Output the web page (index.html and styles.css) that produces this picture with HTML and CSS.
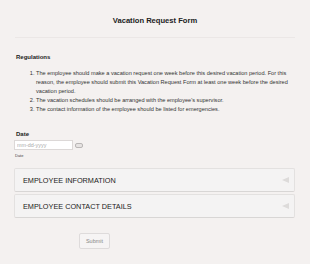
FILE: index.html
```html
<!DOCTYPE html>
<html lang="en">
<head>
    <meta charset="UTF-8">
    <meta name="viewport" content="width=device-width, initial-scale=1.0">
    <title>Vacation Request Form</title>
    <link rel="stylesheet" href="styles.css">
</head>
<body>
    <div class="form-wrap">
        <h1 class="form-title">Vacation Request Form</h1>
        <hr class="title-line">

        <h2 class="section-label">Regulations</h2>
        <ol class="rules">
            <li>The employee should make a vacation request one week before this desired vacation period. For this reason, the employee should submit this Vacation Request Form at least one week before the desired vacation period.</li>
            <li>The vacation schedules should be arranged with the employee's supervisor.</li>
            <li>The contact information of the employee should be listed for emergencies.</li>
        </ol>

        <div class="date-field">
            <label class="section-label" for="vacationDate">Date</label>
            <div class="date-row">
                <input type="text" id="vacationDate" class="date-input" placeholder="mm-dd-yyyy">
                <span class="date-icon"></span>
            </div>
            <span class="sub-label">Date</span>
        </div>

        <div class="panels">
            <div class="panel">
                <span>EMPLOYEE INFORMATION</span>
                <span class="arrow"></span>
            </div>
            <div class="panel">
                <span>EMPLOYEE CONTACT DETAILS</span>
                <span class="arrow"></span>
            </div>
        </div>

        <button type="submit" class="submit-btn">Submit</button>
    </div>
</body>
</html>
```

FILE: styles.css
```css
body {
    margin: 0;
    font-family: "Liberation Sans", Arial, sans-serif;
    background-color: #f4f1f0;
    color: #222;
}
.form-wrap {
    padding: 16px 15px 0 15px;
}
.form-title {
    font-size: 7.6px;
    line-height: 10px;
    text-align: center;
    margin: 0;
}
.title-line {
    border: none;
    border-top: 1px solid #ebe7e6;
    margin: 11px 0 0 0;
}
.section-label {
    display: block;
    font-size: 6px;
    line-height: 8px;
    font-weight: bold;
    margin: 15px 0 0 1px;
}
.rules {
    margin: 8px 0 0 0;
    padding-left: 21px;
    font-size: 5.6px;
    line-height: 9px;
    color: #333;
}
.date-field .section-label {
    margin-top: 16px;
}
.date-row {
    display: flex;
    align-items: center;
    margin-top: 2px;
}
.date-input {
    width: 59px;
    height: 10px;
    box-sizing: border-box;
    border: 1px solid #dcd8d7;
    background: #fff;
    font-family: inherit;
    font-size: 5.4px;
    padding: 0 2px;
    margin: 0 0 0 -1px;
}
.date-input::placeholder {
    color: #aaa;
}
.date-icon {
    width: 6px;
    height: 3px;
    border: 1px solid #b9b6b5;
    border-radius: 2px;
    background: #e6e3e2;
    margin-left: 2px;
}
.sub-label {
    display: block;
    font-size: 4px;
    line-height: 6px;
    color: #444;
    margin-top: 3px;
}
.panels {
    display: flex;
    flex-direction: column;
    gap: 2px;
    margin-top: 9px;
    margin-left: -1px;
}
.panel {
    height: 24px;
    box-sizing: border-box;
    display: flex;
    align-items: center;
    justify-content: space-between;
    padding: 0 5px 0 8px;
    background: #f4f3f3;
    border: 1px solid #e3e1e0;
    border-bottom-color: #d8d6d5;
    border-radius: 2px;
    font-size: 7.3px;
    color: #222;
}
.arrow {
    width: 0;
    height: 0;
    border-top: 3px solid transparent;
    border-bottom: 3px solid transparent;
    border-right: 7px solid #dddbda;
}
.submit-btn {
    display: block;
    margin: 15px 0 0 64px;
    width: 31px;
    height: 16px;
    background: #f6f4f4;
    border: 1px solid #dedbdb;
    border-radius: 2px;
    font-family: inherit;
    font-size: 5.5px;
    color: #888;
    padding: 0;
}
```
